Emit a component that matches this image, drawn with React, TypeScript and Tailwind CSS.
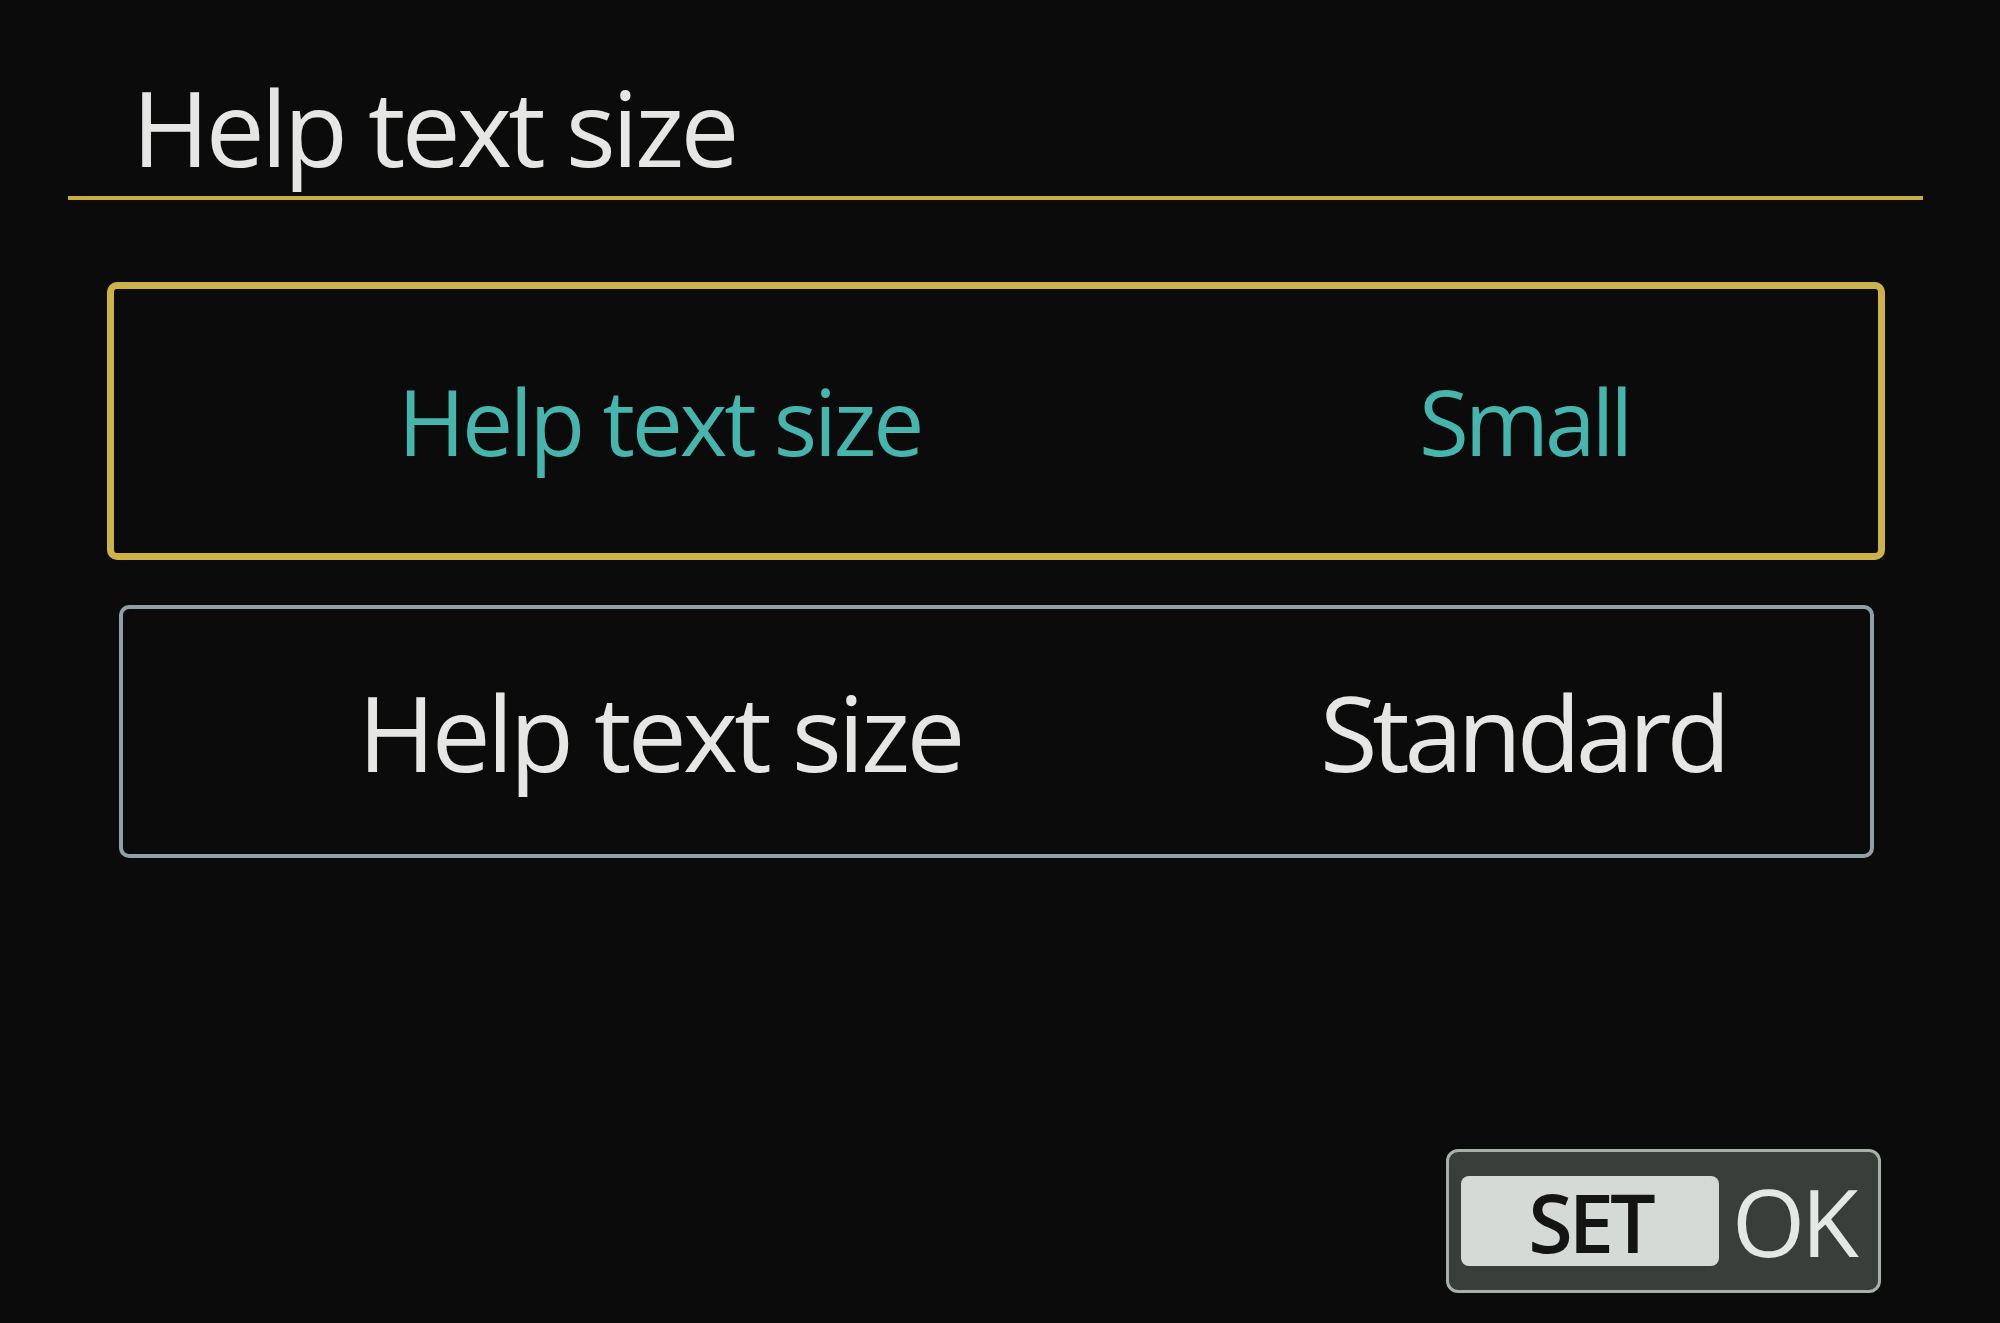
import React from "react";

export default function App() {
  const font = { fontFamily: '"Open Sans", "Noto Sans", sans-serif' };
  return (
    <div
      className="w-[2000px] h-[1323px] bg-[#0a0b0a] flex flex-col overflow-hidden"
      style={font}
    >
      <div className="pt-[74px] pl-[132px]">
        <div className="text-[105px] leading-none font-medium tracking-[-0.035em] text-[#e6e6e4]">
          Help text size
        </div>
      </div>
      <div className="mt-[17px] ml-[68px] w-[1855px] h-[4px] bg-[#c9ad3e]" />

      <div className="mt-[82px] ml-[107px] w-[1778px] h-[278px] border-[7px] border-[#cdb24a] rounded-[10px] flex items-center pl-[284px]">
        <span className="w-[1021px] shrink-0 text-[91px] leading-none font-medium tracking-[-0.035em] text-[#45b5ad]">
          Help text size
        </span>
        <span className="text-[91px] leading-none font-medium tracking-[-0.045em] text-[#45b5ad]">
          Small
        </span>
      </div>

      <div className="mt-[45px] ml-[119px] w-[1755px] h-[253px] border-[4px] border-[#8fa0a6] rounded-[10px] flex items-center pl-[235px]">
        <span className="w-[962px] shrink-0 text-[105px] leading-none font-medium tracking-[-0.035em] text-[#e6e6e4]">
          Help text size
        </span>
        <span className="text-[105px] leading-none font-medium tracking-[-0.05em] text-[#e6e6e4]">
          Standard
        </span>
      </div>

      <div className="flex-1" />

      <div className="flex justify-end pr-[119px] pb-[30px]">
        <div className="w-[435px] h-[144px] border-[3px] border-[#a9b0a9] rounded-[12px] bg-[#3a3e3a] flex items-center pl-[12px]">
          <div className="w-[258px] h-[90px] rounded-[8px] bg-[#d6dad6] flex items-center justify-center">
            <span className="text-[81px] leading-none font-semibold tracking-[-0.05em] text-[#141414]">
              SET
            </span>
          </div>
          <span className="ml-[13px] text-[94px] leading-none font-medium tracking-[-0.04em] text-[#e4e8e4]">
            OK
          </span>
        </div>
      </div>
    </div>
  );
}
